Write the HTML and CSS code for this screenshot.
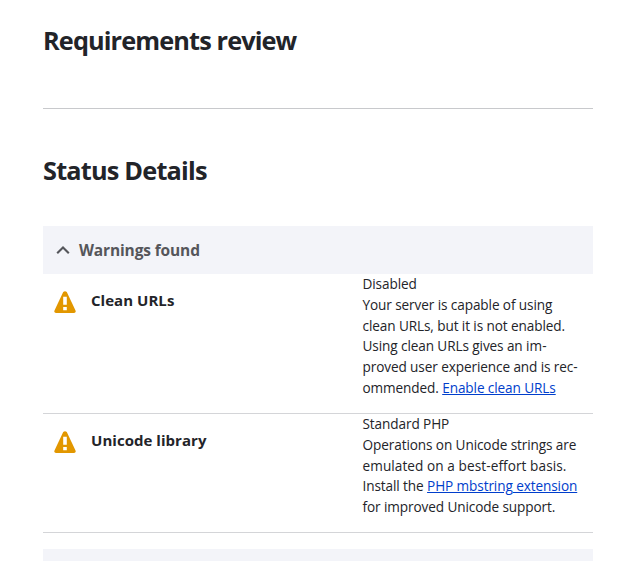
FILE: index.html
```html
<!DOCTYPE html>
<html lang="en">
<head>
<meta charset="utf-8">
<title>Requirements review</title>
<link rel="stylesheet" href="styles.css">
</head>
<body>
<main class="page">
  <header class="page-header"><h1 class="title title-page">Requirements review</h1></header>
  <h2 class="title title-status">Status Details</h2>
  <section class="group">
    <h3 class="group-heading">
      <svg class="chevron" viewBox="0 0 14 10" aria-hidden="true"><path d="M1.2 8.3 7 2.5l5.8 5.8"/></svg>
      <span>Warnings found</span>
    </h3>
    <div class="entry">
      <div class="entry-title">
        <svg class="warning" viewBox="0 0 22 22" aria-hidden="true"><path class="warning-shape" d="M9.2 1.1Q11-.8 12.8 1.1L21.5 19.5Q22.2 22 20 22H2Q-.2 22 .5 19.5Z"/><path class="warning-mark" d="M9.2 5.8h3.6v8H9.2zM9.2 16h3.6v3.3H9.2z"/></svg>
        <span>Clean URLs</span>
      </div>
      <div class="entry-value">Disabled<br>Your server is capable of using<br>clean URLs, but it is not enabled.<br>Using clean URLs gives an <span class="loose">im-</span><br>proved user experience and is rec-<br>ommended. <a href="#">Enable clean URLs</a></div>
    </div>
    <div class="entry">
      <div class="entry-title">
        <svg class="warning" viewBox="0 0 22 22" aria-hidden="true"><path class="warning-shape" d="M9.2 1.1Q11-.8 12.8 1.1L21.5 19.5Q22.2 22 20 22H2Q-.2 22 .5 19.5Z"/><path class="warning-mark" d="M9.2 5.8h3.6v8H9.2zM9.2 16h3.6v3.3H9.2z"/></svg>
        <span>Unicode library</span>
      </div>
      <div class="entry-value">Standard PHP<br>Operations on Unicode strings are<br><span class="loose">emulated on a best-effort basis.</span><br>Install the <a href="#">PHP mbstring extension</a><br>for improved Unicode support.</div>
    </div>
  </section>
  <div class="next-group"></div>
</main>
</body>
</html>
```
FILE: styles.css
```css
* { box-sizing: border-box; }
html { overflow: hidden; }
body {
  margin: 0;
  background: #fff;
  color: #232429;
  font-family: "Open Sans", "Noto Sans", sans-serif;
}
.page { width: 550px; height: 561px; margin-left: 43px; overflow: hidden; white-space: nowrap; }
.page-header { height: 109px; padding-top: 23px; border-bottom: 1px solid #c8c9cc; }
.title { margin: 0; font-size: 25.3px; line-height: 34px; font-weight: 700; color: #222429; letter-spacing: -0.88px; }
.title-status { padding-top: 44px; height: 117px; letter-spacing: -0.8px; }
.group-heading {
  display: flex; align-items: center; gap: 9px;
  height: 48px; margin: 0; padding: 0 13px;
  background: #f3f4f9; color: #55565b;
  font-size: 15.5px; line-height: 24px; letter-spacing: -0.14px;
}
.chevron { width: 14px; height: 10px; fill: none; stroke: #55565b; stroke-width: 2.1; }
.entry { display: grid; grid-template-columns: 319.5px 230.5px; height: 140px; border-bottom: 1px solid #d4d5d8; }
.entry + .entry { height: 119px; }
.entry-title { display: flex; align-items: flex-start; gap: 15px; padding: 14px 0 0 11px; font-size: 15px; line-height: 24px; font-weight: 700; letter-spacing: 0.04px; }
.warning { width: 22px; height: 22px; margin: 3px 0 0; }
.warning-shape { fill: #e29700; }
.warning-mark { fill: #fff; }
.entry-value { padding-top: 0.1px; font-size: 13.6px; line-height: 20.8px; letter-spacing: -0.1px; }
.entry-value a { color: #003ecc; text-decoration: underline; }
.loose { letter-spacing: 0.08px; }
.next-group { height: 12px; margin-top: 16px; background: #f3f4f9; }
```
